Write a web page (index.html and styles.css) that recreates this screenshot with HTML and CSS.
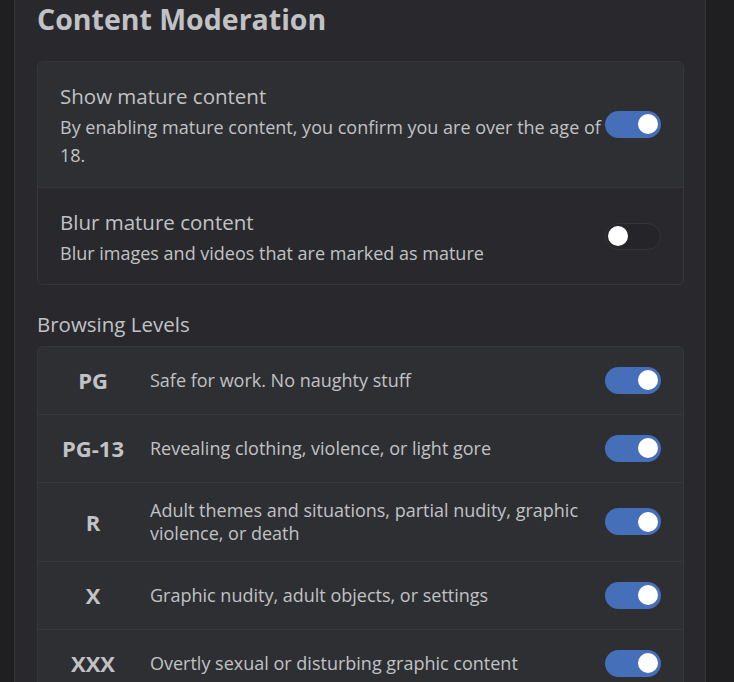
FILE: index.html
```html
<!DOCTYPE html>
<html lang="en">
<head>
<meta charset="utf-8">
<title>Content Moderation</title>
<link rel="stylesheet" href="styles.css">
</head>
<body>
<div class="shell">
  <div class="gutter"></div>
  <main class="panel">
    <h2 class="title">Content Moderation</h2>
    <section class="card">
      <div class="row row-hover">
        <div class="row-text">
          <div class="row-title">Show mature content</div>
          <div class="row-desc">By enabling mature content, you confirm you are over the age of 18.</div>
        </div>
        <span class="switch on"><span class="thumb"></span></span>
      </div>
      <div class="row">
        <div class="row-text">
          <div class="row-title">Blur mature content</div>
          <div class="row-desc">Blur images and videos that are marked as mature</div>
        </div>
        <span class="switch off"><span class="thumb"></span></span>
      </div>
    </section>
    <h3 class="section-title">Browsing Levels</h3>
    <section class="card card-levels">
      <div class="level">
        <div class="level-name">PG</div>
        <div class="level-desc">Safe for work. No naughty stuff</div>
        <span class="switch on"><span class="thumb"></span></span>
      </div>
      <div class="level">
        <div class="level-name">PG-13</div>
        <div class="level-desc">Revealing clothing, violence, or light gore</div>
        <span class="switch on"><span class="thumb"></span></span>
      </div>
      <div class="level">
        <div class="level-name">R</div>
        <div class="level-desc">Adult themes and situations, partial nudity, graphic violence, or death</div>
        <span class="switch on"><span class="thumb"></span></span>
      </div>
      <div class="level">
        <div class="level-name">X</div>
        <div class="level-desc">Graphic nudity, adult objects, or settings</div>
        <span class="switch on"><span class="thumb"></span></span>
      </div>
      <div class="level">
        <div class="level-name">XXX</div>
        <div class="level-desc">Overtly sexual or disturbing graphic content</div>
        <span class="switch on"><span class="thumb"></span></span>
      </div>
    </section>
  </main>
  <div class="gutter gutter-right"></div>
</div>
</body>
</html>
```
FILE: styles.css
```css
html, body {
  margin: 0;
  padding: 0;
  height: 100%;
  overflow: hidden;
  background: #1f1f21;
  font-family: "Open Sans", "Noto Sans", "Liberation Sans", sans-serif;
  color: #c1c2c5;
}

.shell {
  display: flex;
  height: 100%;
}

.gutter {
  width: 14px;
  flex: none;
  background: #1f1f21;
}

.gutter-right {
  flex: 1;
}

.panel {
  width: 692px;
  flex: none;
  box-sizing: border-box;
  background: #29292d;
  border-left: 1px solid #36363a;
  border-right: 1px solid #36363a;
  padding: 0 21px 0 22px;
}

.title {
  margin: 3px 0 26px;
  font-size: 28.5px;
  line-height: 32px;
  font-weight: 700;
  color: #c1c2c5;
}

.card {
  border: 1px solid #36373b;
  border-radius: 6px;
  overflow: hidden;
  background: #29292d;
}

.row {
  display: flex;
  align-items: center;
  padding: 17px 22px;
}

.row + .row {
  border-top: 1px solid #36373b;
}

.row-hover {
  background: #2e2f33;
  padding-bottom: 18px;
}

.row-text {
  flex: 1;
  min-width: 0;
}

.row-title {
  font-size: 20.5px;
  line-height: 34px;
}

.row-desc {
  font-size: 18px;
  line-height: 28px;
}

.section-title {
  margin: 22px 0 5px;
  font-size: 20.5px;
  line-height: 34px;
  font-weight: 400;
}

.card-levels {
  background: #2e2f33;
}

.level {
  display: flex;
  align-items: center;
  padding: 16px 22px 17px;
}

.level + .level {
  border-top: 1px solid #37383c;
}

.level-name {
  width: 66px;
  flex: none;
  text-align: center;
  font-size: 22px;
  line-height: 34px;
  font-weight: 700;
  margin-right: 24px;
}

.level-desc {
  flex: 1;
  min-width: 0;
  font-size: 18px;
  line-height: 22.5px;
}

.switch {
  position: relative;
  flex: none;
  width: 56px;
  height: 27px;
  box-sizing: border-box;
  border-radius: 14px;
}

.switch.on {
  background: #4570b9;
}

.switch.off {
  background: #252529;
  border: 1px solid #36363a;
}

.thumb {
  position: absolute;
  top: 3.5px;
  width: 20px;
  height: 20px;
  border-radius: 50%;
  background: #ffffff;
}

.switch.on .thumb {
  right: 3px;
}

.switch.off .thumb {
  top: 2.5px;
  left: 2px;
}
```
